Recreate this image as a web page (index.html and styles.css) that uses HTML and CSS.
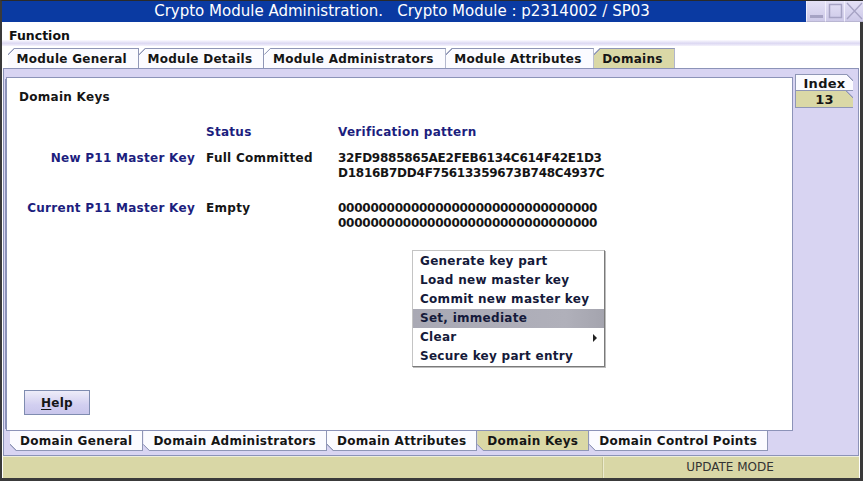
FILE: index.html
```html
<!DOCTYPE html>
<html>
<head>
<meta charset="utf-8">
<link rel="stylesheet" href="styles.css">
</head>
<body>
<div class="window">
  <div class="titlebar">
    <div class="title">Crypto Module Administration.&nbsp;&nbsp; Crypto Module : p2314002 / SP03</div>
    <div class="controls">
      <div class="ctl"><svg width="19" height="20" viewBox="0 0 19 20"><rect x="3" y="14" width="13" height="3" fill="#a6a3c4"/></svg></div>
      <div class="ctl"><svg width="19" height="20" viewBox="0 0 19 20"><rect x="3.5" y="3.5" width="12" height="13" fill="none" stroke="#a6a3c4" stroke-width="1.5"/></svg></div>
      <div class="ctl"><svg width="19" height="20" viewBox="0 0 19 20"><path d="M2 2 L17 18 M17 2 L2 18" stroke="#a6a3c4" stroke-width="1.3"/></svg></div>
    </div>
  </div>
  <div class="menubar"><span class="menu"><u>F</u>unction</span></div>
  <div class="menustrip"></div>
  <div class="toptabs">
    <div class="tab top">Module General</div>
    <div class="tab top">Module Details</div>
    <div class="tab top">Module Administrators</div>
    <div class="tab top">Module Attributes</div>
    <div class="tab top sel">Domains</div>
  </div>
  <div class="main">
    <div class="domainpane">
      <div class="content">
        <div class="heading">Domain Keys</div>
        <div class="krow head">
          <div></div>
          <div class="navy">Status</div>
          <div class="navy">Verification pattern</div>
        </div>
        <div class="krow first">
          <div class="navy label">New P11 Master Key</div>
          <div>Full Committed</div>
          <div class="hex">32FD9885865AE2FEB6134C614F42E1D3<br>D1816B7DD4F75613359673B748C4937C</div>
        </div>
        <div class="krow second">
          <div class="navy label">Current P11 Master Key</div>
          <div>Empty</div>
          <div class="hex">00000000000000000000000000000000<br>00000000000000000000000000000000</div>
        </div>
        <button class="help"><u>H</u>elp</button>
        <div class="popup">
          <div class="mi">Generate key part</div>
          <div class="mi">Load new master key</div>
          <div class="mi">Commit new master key</div>
          <div class="mi hl">Set, immediate</div>
          <div class="mi sub">Clear<span class="arrow"></span></div>
          <div class="mi">Secure key part entry</div>
        </div>
      </div>
      <div class="bottomtabs">
        <div class="tab bot">Domain General</div>
        <div class="tab bot">Domain Administrators</div>
        <div class="tab bot">Domain Attributes</div>
        <div class="tab bot sel">Domain Keys</div>
        <div class="tab bot">Domain Control Points</div>
      </div>
    </div>
    <div class="sidetabs">
      <div class="tab side">Index</div>
      <div class="tab side sel">13</div>
    </div>
  </div>
  <div class="statusbar">
    <div class="st-left"></div>
    <div class="st-right">UPDATE MODE</div>
  </div>
</div>
</body>
</html>
```
FILE: styles.css
```css
* { box-sizing: border-box; }
html, body { margin: 0; padding: 0; }
body {
  width: 863px;
  height: 481px;
  overflow: hidden;
  background: #fff;
  font-family: "DejaVu Sans", "Liberation Sans", sans-serif;
  font-size: 12px;
  font-weight: bold;
  letter-spacing: 0.28px;
  color: #151515;
}
.window {
  width: 863px;
  height: 481px;
  border-top: 1px solid #2a2a2a;
  border-left: 2px solid #3a3a3a;
  border-right: 3px solid #3a3a3a;
  border-bottom: 3px solid #3a3a3a;
  display: flex;
  flex-direction: column;
  background: #fff;
}
.titlebar {
  height: 21px;
  display: flex;
  background: #0a3aa2;
  flex-shrink: 0;
  margin-right: -3px;
}
.title {
  flex: 1;
  text-align: center;
  color: #fff;
  font-weight: normal;
  font-size: 15px;
  letter-spacing: 0;
  line-height: 21px;
  padding-right: 4px;
}
.controls { display: flex; }
.ctl {
  width: 19px;
  height: 21px;
  background: linear-gradient(#e4e1f6, #cdc9e8);
  border-left: 1px solid #f2f0fc;
  border-bottom: 1px solid #b9b6d2;
}
.ctl svg { display: block; }
.menubar {
  height: 18px;
  flex-shrink: 0;
  padding-left: 7px;
  font-weight: bold;
  letter-spacing: 0;
  line-height: 27px;
  font-size: 12.5px;
  color: #111;
}
.menu u { text-decoration-thickness: 1px; text-underline-offset: 2px; }
.menustrip {
  height: 6px;
  flex-shrink: 0;
  background: linear-gradient(#fbfaff, #dcd8f2 55%, #f4f2fc);
}
.toptabs {
  height: 22px;
  flex-shrink: 0;
  display: flex;
  align-items: flex-end;
  padding-left: 6px;
}
.tab {
  font-weight: bold;
  font-size: 12px;
  color: #151515;
  white-space: nowrap;
  flex-shrink: 0;
}
.tab.top {
  height: 20px;
  line-height: 20px;
  padding: 0 11px 0 8.5px;
  border: 1px solid #8f96b6;
  border-bottom: none;
  border-left: none;
  background: linear-gradient(135deg, #8f96b6 0 5.1px, #fbfbff 5.1px) border-box;
  clip-path: polygon(0 6px, 6px 0, 100% 0, 100% 100%, 0 100%);
}
.tab.top.sel { background: linear-gradient(135deg, #8f96b6 0 5.1px, #dad8a6 5.1px) border-box; }
.main {
  height: 388px;
  flex-shrink: 0;
  margin: 0 1px 0 1px;
  border: 1px solid #8c93b8;
  background: #d8d4f2;
  display: flex;
  padding: 8px 2px 4px 2px;
  gap: 2px;
}
.domainpane {
  width: 787px;
  flex-shrink: 0;
  display: flex;
  flex-direction: column;
}
.content {
  position: relative;
  height: 354px;
  flex-shrink: 0;
  background: #fff;
  border: 1px solid #8c93b8;
  box-shadow: -3px 0 0 -2px #8c93b8;
  padding: 12px 12px 0 12px;
  display: flex;
  flex-direction: column;
  line-height: 15px;
}
.heading { color: #151515; }
.krow {
  display: grid;
  grid-template-columns: 176px 121px auto;
  column-gap: 11px;
}
.krow.head { margin-top: 20px; }
.krow.first { margin-top: 11px; }
.krow.second { margin-top: 20px; }
.hex { letter-spacing: -0.25px; }
.navy { color: #1c1e7e; }
.label { text-align: right; }
.help {
  margin-top: auto;
  margin-bottom: 15px;
  margin-left: 5px;
  width: 66px;
  height: 25px;
  align-self: flex-start;
  border: 1px solid #7f8cb0;
  background: linear-gradient(#eeedf9, #d2cff0 60%, #c9c6ec);
  font-family: "DejaVu Sans", sans-serif;
  font-weight: bold;
  font-size: 12px;
  letter-spacing: 0.28px;
  color: #151515;
  padding: 0;
}
.help u { text-underline-offset: 2px; }
.popup {
  position: absolute;
  left: 405px;
  top: 172px;
  width: 193px;
  height: 117px;
  background: #fff;
  border: 1px solid #c4c4c4;
  border-right-color: #7a7a7a;
  border-bottom-color: #7a7a7a;
  box-shadow: 1px 1px 0 #bdbdbd;
  padding-top: 1px;
}
.mi {
  height: 19px;
  line-height: 19px;
  padding-left: 7px;
  color: #151a3a;
  position: relative;
}
.mi.hl { background: linear-gradient(90deg, #a9a9b4, #b0b0ba 80%, #a4a4ae); }
.arrow {
  position: absolute;
  right: 7px;
  top: 6px;
  border-left: 4px solid #222;
  border-top: 4px solid transparent;
  border-bottom: 4px solid transparent;
}
.bottomtabs {
  display: flex;
  padding-left: 4px;
  height: 20px;
  flex-shrink: 0;
}
.tab.bot {
  height: 20px;
  line-height: 20px;
  padding: 0 10px 0 10px;
  border: 1px solid #8f96b6;
  border-top: none;
  border-left: none;
  background: linear-gradient(45deg, #8f96b6 0 5.1px, #fbfbff 5.1px) border-box;
  clip-path: polygon(0 0, 100% 0, 100% 100%, 6px 100%, 0 calc(100% - 6px));
}
.tab.bot.sel { background: linear-gradient(45deg, #8f96b6 0 5.1px, #dad8a6 5.1px) border-box; }
.sidetabs {
  width: 58px;
  margin-top: -3px;
  display: flex;
  flex-direction: column;
}
.tab.side {
  height: 17px;
  line-height: 17px;
  text-align: center;
  font-size: 13px;
  border: 1px solid #8f96b6;
  border-top: none;
  border-right: none;
  background: linear-gradient(225deg, #8f96b6 0 5.1px, #fbfbff 5.1px) border-box;
  clip-path: polygon(0 0, calc(100% - 6px) 0, 100% 6px, 100% 100%, 0 100%);
}
.tab.side:first-child { border-top: 1px solid #8f96b6; }
.tab.side.sel { background: linear-gradient(225deg, #8f96b6 0 5.1px, #dad8a6 5.1px) border-box; }
.statusbar {
  flex: 1;
  display: flex;
  margin: 0 1px;
  border-top: 1px solid #eeeedc;
  background: #d9d7a6;
}
.st-left {
  width: 600px;
  border-right: 1px solid #c6c494;
  box-shadow: 1px 0 0 #ecebcf;
}
.st-right {
  flex: 1;
  text-align: center;
  font-weight: normal;
  letter-spacing: 0;
  color: #333;
  line-height: 20px;
  padding-right: 2px;
}
```
